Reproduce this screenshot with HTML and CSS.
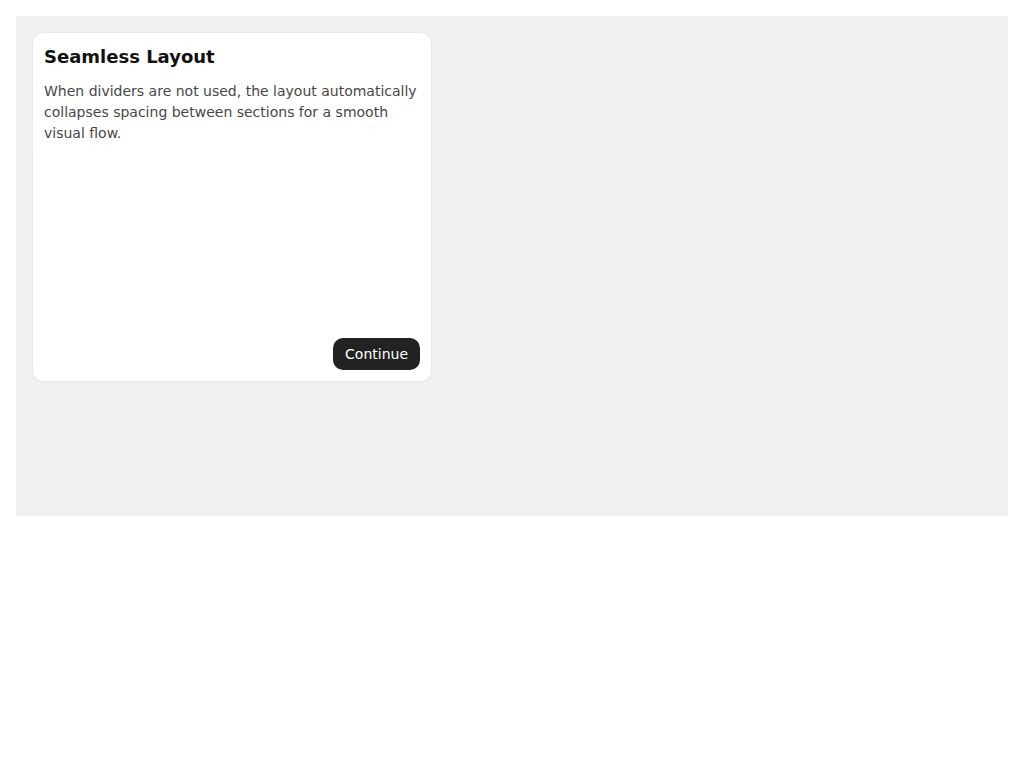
FILE: index.html
```html
<!DOCTYPE html>
<html>
<head>
<meta charset="utf-8">
<link rel="stylesheet" href="styles.css">
</head>
<body>
<div class="stage">
  <div class="card">
    <h2 class="card-title">Seamless Layout</h2>
    <p class="card-text">When dividers are not used, the layout automatically collapses spacing between sections for a smooth visual flow.</p>
    <div class="card-actions">
      <button class="btn">Continue</button>
    </div>
  </div>
</div>
</body>
</html>
```

FILE: styles.css
```css
html, body {
  margin: 0;
  padding: 0;
  background: #ffffff;
}
body {
  padding: 16px;
  font-family: "DejaVu Sans", sans-serif;
}
.stage {
  background: #f0f0f0;
  height: 500px;
  padding: 16px;
  box-sizing: border-box;
}
.card {
  width: 400px;
  height: 350px;
  box-sizing: border-box;
  background: #ffffff;
  border: 1px solid #e9e9e9;
  border-radius: 12px;
  padding: 13px 11px 11px 11px;
  display: flex;
  flex-direction: column;
}
.card-title {
  margin: 0;
  font-size: 18px;
  font-weight: bold;
  color: #111111;
  line-height: 21px;
}
.card-text {
  margin: 14px 0 0 0;
  font-size: 14px;
  line-height: 21px;
  color: #474747;
}
.card-actions {
  margin-top: auto;
  display: flex;
  justify-content: flex-end;
}
.btn {
  font-family: "DejaVu Sans", sans-serif;
  font-size: 14px;
  line-height: 18px;
  color: #ffffff;
  background: #222222;
  border: none;
  border-radius: 10px;
  padding: 7px 12px;
  cursor: pointer;
}
```
